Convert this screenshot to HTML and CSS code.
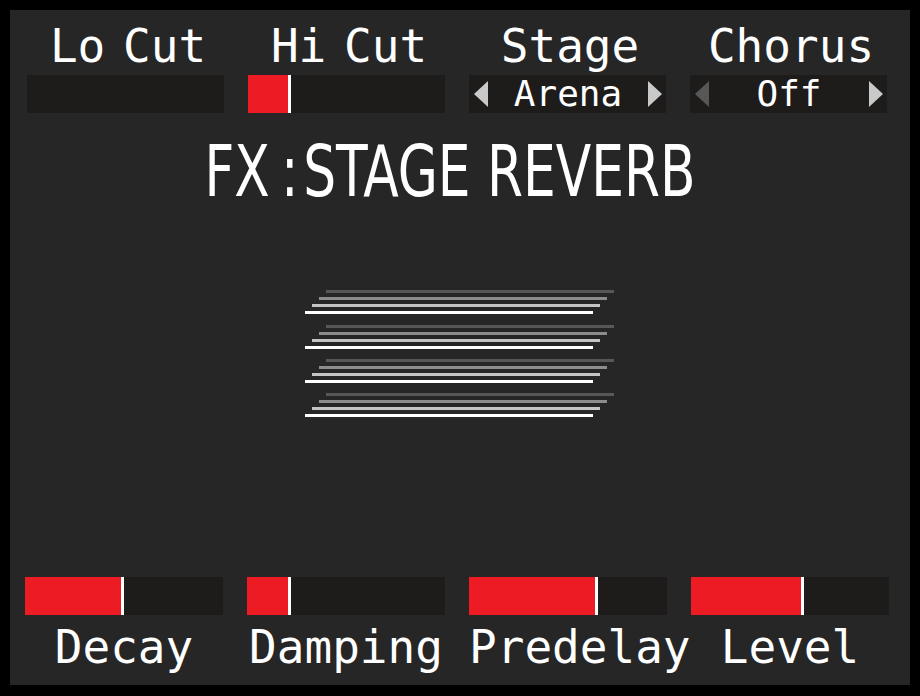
FILE: index.html
```html
<!DOCTYPE html>
<html>
<head>
<meta charset="utf-8">
<link rel="stylesheet" href="styles.css">
</head>
<body>
<div class="panel">
  <div class="grid top-grid">
    <div class="label">Lo Cut</div>
    <div class="label">Hi Cut</div>
    <div class="label">Stage</div>
    <div class="label">Chorus</div>

    <div class="bar"></div>
    <div class="bar"><div class="fill" style="width:22%"></div></div>
    <div class="bar selector">
      <svg class="arrow" width="14" height="26" viewBox="0 0 14 26"><polygon points="14,0 14,26 0,13" class="arrow-on"/></svg>
      <span class="sel-text">Arena</span>
      <svg class="arrow" width="14" height="26" viewBox="0 0 14 26"><polygon points="0,0 0,26 14,13" class="arrow-on"/></svg>
    </div>
    <div class="bar selector">
      <svg class="arrow" width="14" height="26" viewBox="0 0 14 26"><polygon points="14,0 14,26 0,13" class="arrow-off"/></svg>
      <span class="sel-text">Off</span>
      <svg class="arrow" width="14" height="26" viewBox="0 0 14 26"><polygon points="0,0 0,26 14,13" class="arrow-on"/></svg>
    </div>
  </div>

  <div class="title-row"><span class="title">FX<span class="colon">:</span>STAGE REVERB</span></div>

  <div class="graphic">
    <svg width="312" height="128" viewBox="0 0 312 128">
      <g class="grp">
        <rect class="l1" x="21" y="0" width="288" height="3"/>
        <rect class="l2" x="14" y="7" width="288" height="3"/>
        <rect class="l3" x="7" y="14" width="288" height="3"/>
        <rect class="l4" x="0" y="21" width="288" height="3"/>
      </g>
      <g class="grp" transform="translate(0,35)">
        <rect class="l1" x="21" y="0" width="288" height="3"/>
        <rect class="l2" x="14" y="7" width="288" height="3"/>
        <rect class="l3" x="7" y="14" width="288" height="3"/>
        <rect class="l4" x="0" y="21" width="288" height="3"/>
      </g>
      <g class="grp" transform="translate(0,69)">
        <rect class="l1" x="21" y="0" width="288" height="3"/>
        <rect class="l2" x="14" y="7" width="288" height="3"/>
        <rect class="l3" x="7" y="14" width="288" height="3"/>
        <rect class="l4" x="0" y="21" width="288" height="3"/>
      </g>
      <g class="grp" transform="translate(0,103)">
        <rect class="l1" x="21" y="0" width="288" height="3"/>
        <rect class="l2" x="14" y="7" width="288" height="3"/>
        <rect class="l3" x="7" y="14" width="288" height="3"/>
        <rect class="l4" x="0" y="21" width="288" height="3"/>
      </g>
    </svg>
  </div>

  <div class="grid bottom-grid">
    <div class="bar"><div class="fill" style="width:50%"></div></div>
    <div class="bar"><div class="fill" style="width:22%"></div></div>
    <div class="bar"><div class="fill" style="width:65%"></div></div>
    <div class="bar"><div class="fill" style="width:57%"></div></div>

    <div class="label">Decay</div>
    <div class="label">Damping</div>
    <div class="label">Predelay</div>
    <div class="label">Level</div>
  </div>
</div>
</body>
</html>
```

FILE: styles.css
```css
* { box-sizing: border-box; }

html, body {
  margin: 0;
  padding: 0;
  background: #000;
}

body {
  width: 920px;
  height: 696px;
  overflow: hidden;
}

.panel {
  margin: 10px;
  width: 900px;
  height: 675px;
  background: #262626;
  display: flex;
  flex-direction: column;
  padding: 13px 0 15px 0;
}

.grid {
  display: grid;
  grid-template-columns: repeat(4, 197px);
  column-gap: 24px;
}

.top-grid {
  margin-left: 17px;
  row-gap: 6px;
}

.top-grid .label {
  word-spacing: -10px;
  padding-left: 5px;
}

.bottom-grid {
  margin-top: auto;
  margin-left: 15px;
  grid-template-columns: repeat(4, 198px);
  row-gap: 9px;
}

.label {
  font-family: "DejaVu Sans Mono", monospace;
  font-size: 46px;
  line-height: 46px;
  color: #fff;
  text-align: center;
  white-space: nowrap;
}

.bar {
  height: 38px;
  background: #1e1b1b;
  display: flex;
}

.fill {
  height: 100%;
  background: #ed1c24;
  border-right: 3px solid #fff;
}

.selector {
  align-items: center;
  justify-content: space-between;
  padding: 0 4px 0 5px;
}

.arrow { display: block; }
.arrow-on { fill: #c9c9c9; }
.arrow-off { fill: #575757; }

.sel-text {
  font-family: "DejaVu Sans Mono", monospace;
  font-size: 36px;
  line-height: 38px;
  color: #fff;
}

.title-row {
  margin-top: 22px;
  padding-right: 20px;
  text-align: center;
  height: 72px;
}

.title {
  display: inline-block;
  font-family: "DejaVu Sans Condensed", "DejaVu Sans", sans-serif;
  font-stretch: condensed;
  font-size: 72px;
  line-height: 72px;
  color: #fff;
  transform: scaleX(0.8);
  transform-origin: center;
}

.colon {
  margin: 0 6px 0 14px;
}

.graphic {
  margin-top: 83px;
  padding-left: 295px;
}

.graphic svg { display: block; }

.l1 { fill: #575757; }
.l2 { fill: #8c8c8c; }
.l3 { fill: #c4c4c4; }
.l4 { fill: #ffffff; }
```
